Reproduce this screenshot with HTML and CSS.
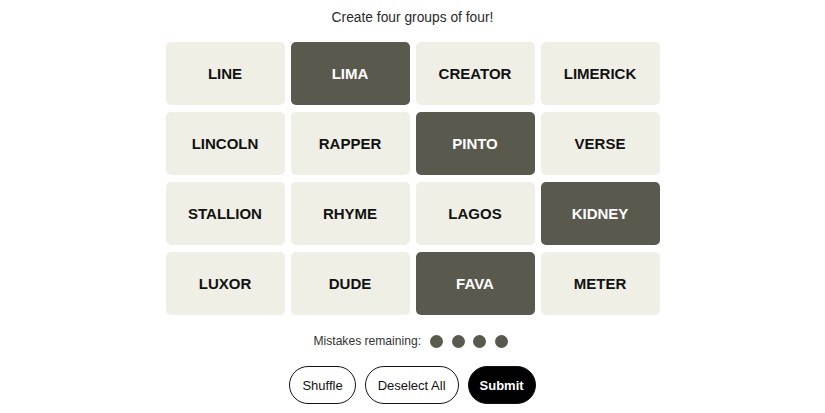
FILE: index.html
```html
<!DOCTYPE html>
<html lang="en">
<head>
    <meta charset="UTF-8">
    <meta name="viewport" content="width=device-width, initial-scale=1.0">
    <title>Connections</title>
    <link rel="stylesheet" href="styles.css">
</head>
<body>
    <main class="game">
        <p class="prompt">Create four groups of four!</p>

        <div class="board">
            <button class="tile">Line</button>
            <button class="tile selected">Lima</button>
            <button class="tile">Creator</button>
            <button class="tile">Limerick</button>

            <button class="tile">Lincoln</button>
            <button class="tile">Rapper</button>
            <button class="tile selected">Pinto</button>
            <button class="tile">Verse</button>

            <button class="tile">Stallion</button>
            <button class="tile">Rhyme</button>
            <button class="tile">Lagos</button>
            <button class="tile selected">Kidney</button>

            <button class="tile">Luxor</button>
            <button class="tile">Dude</button>
            <button class="tile selected">Fava</button>
            <button class="tile">Meter</button>
        </div>

        <div class="mistakes">
            <span>Mistakes remaining:</span>
            <span class="dots">
                <span class="dot"></span>
                <span class="dot"></span>
                <span class="dot"></span>
                <span class="dot"></span>
            </span>
        </div>

        <div class="controls">
            <button class="pill">Shuffle</button>
            <button class="pill">Deselect All</button>
            <button class="pill submit">Submit</button>
        </div>
    </main>
</body>
</html>
```

FILE: styles.css
```css
body {
    margin: 0;
    background: #fff;
    color: #121212;
    font-family: "Liberation Sans", Arial, sans-serif;
}
.game {
    display: flex;
    flex-direction: column;
    align-items: center;
}
.prompt {
    margin: 8px 0 0;
    font-size: 13.8px;
    line-height: 20px;
    color: #2a2a2a;
}
.board {
    display: grid;
    grid-template-columns: repeat(4, 119px);
    grid-auto-rows: 63px;
    column-gap: 6px;
    row-gap: 7px;
    margin-top: 14px;
}
.tile {
    border: none;
    border-radius: 5px;
    background: #efefe6;
    color: #121212;
    font-family: inherit;
    font-size: 15px;
    font-weight: bold;
    text-transform: uppercase;
    padding: 0;
}
.tile.selected {
    background: #5a594e;
    color: #fff;
}
.mistakes {
    display: flex;
    align-items: center;
    gap: 9px;
    margin-top: 19px;
    margin-left: -4px;
    font-size: 12.1px;
    color: #333;
}
.dots {
    display: flex;
    gap: 8.5px;
}
.dot {
    width: 13px;
    height: 13px;
    border-radius: 50%;
    background: #5a594e;
}
.controls {
    display: flex;
    gap: 9px;
    margin-top: 18px;
}
.pill {
    height: 38px;
    padding: 0 12px;
    border: 1px solid #121212;
    border-radius: 19px;
    background: #fff;
    color: #121212;
    font-family: inherit;
    font-size: 13px;
    font-weight: normal;
}
.submit {
    padding: 0 11px;
    background: #000;
    color: #fff;
    font-weight: bold;
}
```
